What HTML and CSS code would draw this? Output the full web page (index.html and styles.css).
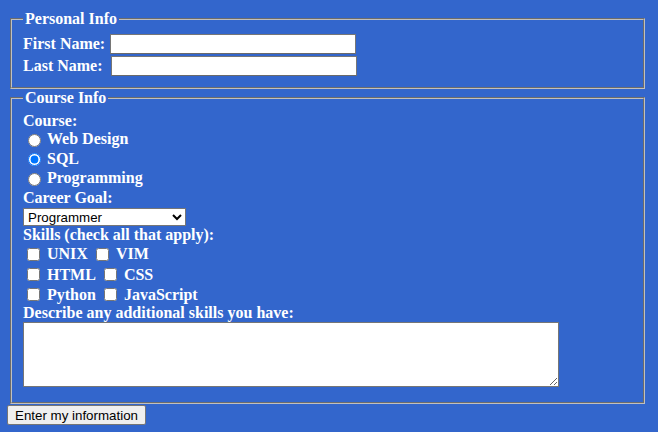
FILE: index.html
```html
<!DOCTYPE html>
<html lang="en">
<head>
<meta charset="utf-8">
<title>Course Registration</title>
<link rel="stylesheet" href="styles.css">
</head>
<body>
<form class="form">
  <fieldset class="box">
    <legend class="box-title">Personal Info</legend>
    <div class="row row-name">
      <label class="lbl" for="fname">First Name:</label>
      <input class="text-in gap-1" id="fname" type="text">
    </div>
    <div class="row row-name">
      <label class="lbl" for="lname">Last Name:</label>
      <input class="text-in gap-2" id="lname" type="text">
    </div>
  </fieldset>
  <fieldset class="box">
    <legend class="box-title">Course Info</legend>
    <div class="row r-course">Course:</div>
    <div class="row r-20"><label class="opt"><input class="radio" type="radio" name="course"> Web Design</label></div>
    <div class="row r-19"><label class="opt"><input class="radio" type="radio" name="course" checked> SQL</label></div>
    <div class="row r-20"><label class="opt"><input class="radio" type="radio" name="course"> Programming</label></div>
    <div class="row r-19">Career Goal:</div>
    <div class="row r-19">
      <select class="pick">
        <option>Programmer</option>
        <option>Web Developer</option>
        <option>Database Administrator</option>
      </select>
    </div>
    <div class="row r-17">Skills (check all that apply):</div>
    <div class="row r-22">
      <label class="opt"><input class="check" type="checkbox"> UNIX</label>
      <label class="opt"><input class="check" type="checkbox"> VIM</label>
    </div>
    <div class="row r-19">
      <label class="opt"><input class="check" type="checkbox"> HTML</label>
      <label class="opt"><input class="check" type="checkbox"> CSS</label>
    </div>
    <div class="row r-21">
      <label class="opt"><input class="check" type="checkbox"> Python</label>
      <label class="opt"><input class="check" type="checkbox"> JavaScript</label>
    </div>
    <div class="row r-16">Describe any additional skills you have:</div>
    <div class="area-row">
      <textarea class="area"></textarea>
    </div>
  </fieldset>
  <button class="submit" type="submit">Enter my information</button>
</form>
</body>
</html>
```
FILE: styles.css
```css
html, body {
  margin: 0;
  background: #3366cc;
}
body {
  color: #ffffff;
  font-family: "Liberation Serif", "Times New Roman", serif;
  font-size: 16px;
  font-weight: bold;
}
.form {
  padding: 10px 13px 0 6px;
}
.box {
  margin: 0 0 0 4px;
  padding: 5.5px 11px 10px 11px;
  border: 2px groove #c0c0c0;
  min-width: 0;
}
.box-title {
  padding: 0 2px;
  line-height: 18px;
}
.row {
  display: flex;
  align-items: center;
  white-space: nowrap;
}
.row-name { height: 21.5px; }
.r-course { height: 17px; }
.r-16 { height: 16px; }
.r-17 { height: 17px; }
.r-19 { height: 19px; }
.r-20 { height: 20px; }
.r-21 { height: 21px; }
.r-22 { height: 22px; }
.lbl { display: block; }
.text-in {
  box-sizing: border-box;
  width: 246px;
  height: 20px;
  margin: 0;
  padding: 1px 2px;
  border: 1px solid #767676;
  border-bottom-color: #6a6a6a;
  background: #ffffff;
  font: 13.33px "Liberation Sans", Arial, sans-serif;
}
.gap-1 { margin-left: 4.5px; }
.gap-2 { margin-left: 8px; }
.opt {
  display: flex;
  align-items: center;
}
.opt + .opt { margin-left: 4px; }
.radio {
  width: 13px;
  height: 13px;
  margin: 2px 6px 0 5px;
}
.check {
  width: 13px;
  height: 13px;
  margin: 0 7px 0 4px;
}
.pick {
  box-sizing: border-box;
  width: 163px;
  height: 18px;
  margin: 0;
  padding: 0;
  border: 1px solid #767676;
  border-radius: 0;
  background: #ffffff;
  color: #000000;
  font: 13.33px "Liberation Sans", Arial, sans-serif;
}
.area-row {
  padding: 1px 0 4.5px 0;
}
.area {
  display: block;
  box-sizing: border-box;
  width: 536px;
  height: 65px;
  margin: 0;
  padding: 2px;
  border: 1px solid #767676;
  background: #ffffff;
  font: 13.33px "Liberation Mono", monospace;
}
.submit {
  display: block;
  box-sizing: border-box;
  height: 20px;
  margin: 1.5px 0 0 1px;
  padding: 0 7px;
  border: 1px solid #767676;
  border-radius: 2px;
  background: #efefef;
  color: #000000;
  font: 13.33px "Liberation Sans", Arial, sans-serif;
}
```
